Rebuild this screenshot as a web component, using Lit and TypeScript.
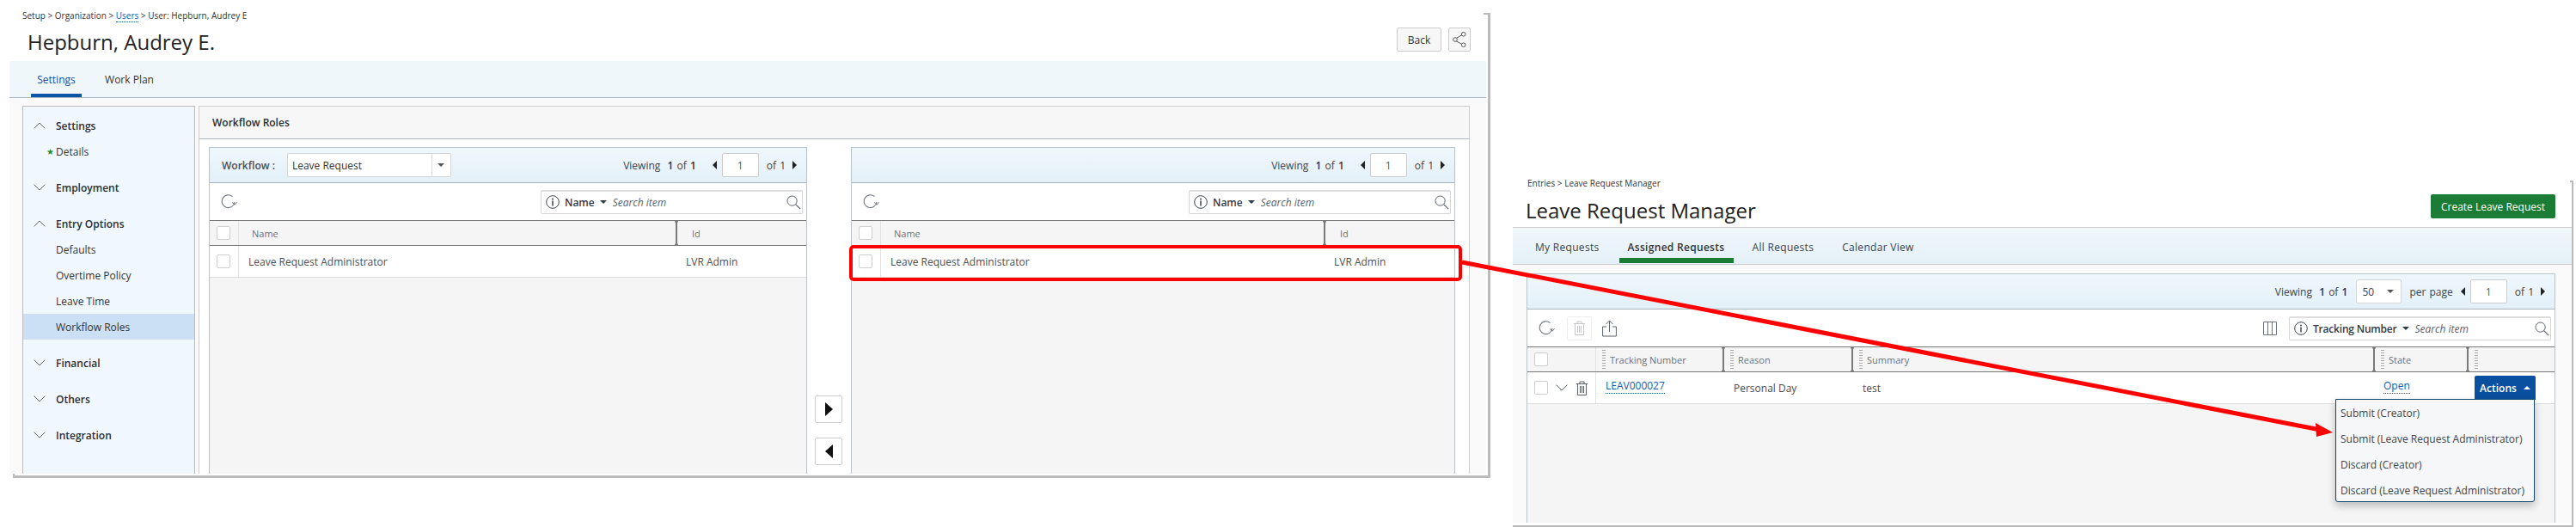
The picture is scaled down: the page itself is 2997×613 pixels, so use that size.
import { LitElement, html, css, svg } from "lit";
import { customElement } from "lit/decorators.js";

const refreshIcon = html`<svg class="ico" width="19" height="18" viewBox="0 0 19 18"><path d="M13.5 2.6A7.4 7.4 0 1 0 16 9" fill="none" stroke="#6d747c" stroke-width="1.1"/><path d="M13.2 9.6l3 2.6 2.3-3" fill="none" stroke="#6d747c" stroke-width="1"/></svg>`;
const infoIcon = html`<svg class="ico" width="16" height="16" viewBox="0 0 16 16"><circle cx="8" cy="8" r="7.3" fill="none" stroke="#3d4650" stroke-width="1"/><circle cx="8" cy="4.4" r="1" fill="#3d4650"/><path d="M8 6.6v5.8" stroke="#3d4650" stroke-width="1.5"/></svg>`;
const magIcon = html`<svg class="ico" width="17" height="17" viewBox="0 0 17 17"><circle cx="6.6" cy="6.6" r="5.6" fill="none" stroke="#59616a" stroke-width="1"/><path d="M10.6 10.6l5.6 5.6" stroke="#59616a" stroke-width="1.2"/></svg>`;
const trashIcon = (c: string) => html`<svg class="ico" width="15" height="17" viewBox="0 0 15 17"><path d="M1 3.5h13M5 3.5V1h5v2.5M2.5 3.5v13h10v-13M5.5 6v8M7.5 6v8M9.5 6v8" fill="none" stroke="${c}" stroke-width="1"/></svg>`;
const chevDown = html`<svg class="ico" width="14" height="8" viewBox="0 0 14 8"><path d="M.7.7L7 7l6.3-6.3" fill="none" stroke="#5c6670" stroke-width="1"/></svg>`;
const chevUp = html`<svg class="ico" width="14" height="8" viewBox="0 0 14 8"><path d="M.7 7.3L7 1l6.3 6.3" fill="none" stroke="#5c6670" stroke-width="1"/></svg>`;

@customElement("app-root")
export class AppRoot extends LitElement {
  static styles = css`
    :host { display: block; position: relative; width: 2997px; height: 613px; overflow: hidden; background: #fff;
      font-family: "Open Sans", sans-serif; color: #333; font-size: 12px; }
    .ico { display: block; flex: none; }
    .page { display: flex; align-items: flex-start; }

    .win-l { position: relative; margin-left: 11px; width: 1718px; height: 551px; display: flex; flex-direction: column; }
    .win-l::after { content: ""; position: absolute; left: 4px; top: 15px; width: 1716px; height: 538px;
      border-right: 3px solid #bbb; border-bottom: 3px solid #bbb; pointer-events: none; box-sizing: content-box; }
    .tick-t { position: absolute; right: -2px; top: 15px; width: 5px; height: 2px; background: #bbb; }
    .tick-b { position: absolute; left: 4px; top: 551px; width: 2px; height: 5px; background: #bbb; }
    .head-l { height: 71px; flex: none; padding-left: 15px; display: flex; justify-content: space-between; }
    .crumb { font-size: 10px; line-height: 14px; color: #333; white-space: nowrap; }
    .crumb a { color: #0a5bb5; border-bottom: 1px dotted #0a5bb5; }
    .h-l-text { padding-top: 11px; }
    h1 { margin: 0; font-weight: 400; color: #222; white-space: nowrap; }
    .h-l-text h1 { font-size: 24px; line-height: 34px; margin: 7px 0 0 6px; }
    .btns { display: flex; gap: 8px; padding: 32px 18px 0 0; }
    .btn { height: 28px; box-sizing: border-box; border: 1px solid #ccc; border-radius: 2px; background: #f7f7f7;
      display: flex; align-items: center; justify-content: center; font-size: 12px; }
    .back { width: 52px; }
    .share { width: 26px; }

    .tabs { flex: none; display: flex; background: #f0f7fb; border-bottom: 1px solid #aab6c4; box-sizing: border-box; }
    .tabs-l { height: 43px; padding-left: 25px; gap: 26px; }
    .tab-l { width: 59px; height: 42px; box-sizing: border-box; padding-top: 14px; line-height: 16px; text-align: center; white-space: nowrap; }
    .tab-l.on { color: #0a55a5; border-bottom: 4px solid #0a55a5; }
    .body-l { flex: 1; min-height: 0; background: #fafafa; display: flex; gap: 4px; padding: 9px 19px 0 15px; }
    .side { width: 201px; box-sizing: border-box; background: #f1f8fd; border: 1px solid #bbb; border-bottom: 0; padding-top: 7px; }
    .sec { height: 30px; display: flex; align-items: center; gap: 12px; padding-left: 12px; font-weight: 600; color: #2b2f33; }
    .sec.gap { margin-top: 12px; }
    .item { height: 30px; display: flex; align-items: center; padding-left: 38px; position: relative; }
    .item.on { background: #cce0f5; }
    .star { color: #1e8a3c; font-size: 10px; position: absolute; left: 27px; top: 8px; }

    .main { flex: 1; min-width: 0; box-sizing: border-box; background: #fff; border: 1px solid #ccc; border-bottom: 0; display: flex; flex-direction: column; }
    .main-h { height: 38px; flex: none; box-sizing: border-box; background: #f7f7f7; border-bottom: 1px solid #aab6c4; padding: 0 15px; display: flex; align-items: center; font-weight: 600; color: #2b2f33; }
    .main-b { flex: 1; min-height: 0; display: grid; grid-template-columns: 696px 51px 703px; padding: 9px 17px 0 11px; }
    .panel { box-sizing: border-box; border: 1px solid #b9c1c9; border-bottom: 0; background: #f5f5f5; display: flex; flex-direction: column; }
    .bar1 { height: 41px; flex: none; box-sizing: border-box; background: linear-gradient(#eff7fc, #e3f0f8); border-bottom: 1px solid #a9b1b9; display: flex; align-items: center; }
    .bar2 { height: 43px; flex: none; box-sizing: border-box; background: #fff; display: flex; align-items: center; padding-left: 13px; }
    .lab { font-weight: 600; color: #4a5158; margin-left: 14px; }
    .sel { box-sizing: border-box; height: 28px; background: #fff; border: 1px solid #d5d5d5; border-radius: 2px; display: flex; align-items: center; justify-content: space-between; }
    .sel-l { width: 191px; margin-left: 14px; padding-left: 5px; }
    .sel-l i { width: 21px; height: 26px; border-left: 1px solid #ddd; display: flex; align-items: center; justify-content: center; }
    .sel-r { width: 53px; margin: 0 9px 0 10px; padding: 0 8px 0 6px; }
    .caret { width: 0; height: 0; border: 4px solid transparent; border-top: 4px solid #555; border-bottom: 0; display: block; flex: none; }
    .caret.dk { border-top-color: #2f3a45; margin: 0 7px 0 6px; }
    .pager { margin-left: auto; margin-right: 11px; display: flex; align-items: center; white-space: nowrap; color: #3c444c; word-spacing: 1px; }
    .pager b { font-weight: 600; color: #333; }
    .tl { width: 0; height: 0; border: 5px solid transparent; border-right: 5px solid #222; border-left: 0; display: block; flex: none; margin-left: 9px; }
    .pager .first { margin-left: 19px; }
    .tr { width: 0; height: 0; border: 5px solid transparent; border-left: 5px solid #222; border-right: 0; display: block; flex: none; margin-left: 8px; }
    .pg { width: 43px; height: 28px; box-sizing: border-box; background: #fff; border: 1px solid #ccc; border-radius: 2px; display: flex; align-items: center; justify-content: center; color: #556; margin: 0 9px 0 6px; }
    .search { box-sizing: border-box; width: 305px; height: 28px; margin-left: auto; margin-right: 4px; border: 1px solid #d5d5d5; border-top: 2px solid #ddd; border-radius: 2px; background: #fff; display: flex; align-items: center; padding-left: 5px; }
    .search.after { margin-left: 14px; }
    .search.after .fld { letter-spacing: -.2px; }
    .search .fld { font-weight: 600; color: #2f3a45; margin-left: 6px; white-space: nowrap; }
    .search .ph { font-style: italic; color: #59616a; white-space: nowrap; }
    .search .mg { margin-left: auto; margin-right: 1px; }

    .thead, .trow { display: grid; flex: none; box-sizing: border-box; background: #fff; }
    .thead { height: 30px; background: #f5f5f5; border-top: 1px solid #777; border-bottom: 1px solid #777; color: #6a7178; font-size: 11px; }
    .trow { height: 37px; border-bottom: 1px solid #ddd; color: #474e55; }
    .roles-a { grid-template-columns: 34px 508px 1fr; }
    .roles-b { grid-template-columns: 34px 515px 1fr; }
    .reqs { grid-template-columns: 80px 147px 150px 607px 109px 1fr; }
    .c { display: flex; align-items: center; min-width: 0; white-space: nowrap; position: relative; }
    .p7 { padding-left: 7px; } .p11 { padding-left: 11px; } .p12 { padding-left: 12px; } .p13 { padding-left: 13px; } .p15 { padding-left: 15px; } .p17 { padding-left: 17px; }
    .ck { border-right: 1px solid #e2e2e2; padding-left: 8px; gap: 9px; }
    .box { width: 16px; height: 16px; box-sizing: border-box; border: 1px solid #cfcfcf; border-radius: 2px; background: #fff; flex: none; }
    .div { border-left: 2px solid #7a7a7a; }
    .div::before, .div::after { content: ""; position: absolute; left: -3px; width: 4px; height: 3px; background: #7a7a7a; border-radius: 50%; }
    .div::before { top: -1px; } .div::after { bottom: -1px; }
    .grip { width: 4px; height: 24px; margin-right: 5px; flex: none; background-image: radial-gradient(#aaa 0.6px, transparent 0.7px); background-size: 2px 3px; }

    .mid { display: flex; flex-direction: column; padding: 289px 0 0 9px; gap: 17px; }
    .mv { width: 32px; height: 32px; box-sizing: border-box; background: #fff; border: 1px solid #ccc; border-radius: 2px; display: flex; align-items: center; justify-content: center; }
    .tlb { border-width: 8px 9px 8px 0; border-right-color: #111; margin: 0; }
    .trb { border-width: 8px 0 8px 9px; border-left-color: #111; margin: 0; }

    .win-r { position: relative; margin: 205px 0 0 31px; width: 1232px; height: 403px; display: flex; flex-direction: column; }
    .win-r::after { content: ""; position: absolute; left: 0; top: 5px; width: 1232px; height: 401px; border-right: 2px solid #bbb; border-bottom: 2px solid #bbb; pointer-events: none; }
    .tick-r { position: absolute; right: -2px; top: 5px; width: 4px; height: 2px; background: #bbb; }
    .head-r { height: 60px; flex: none; box-sizing: border-box; border-bottom: 1px solid #ccc; display: flex; justify-content: space-between; padding-left: 15px; }
    .head-r h1 { font-size: 24px; line-height: 34px; margin: 7px 0 0 0; }
    .crumb-r { padding-left: 2px; height: 16px; line-height: 16px; }
    .create { margin: 21px 19px 0 0; width: 145px; height: 28px; background: #1b7c35; color: #fff; border-radius: 2px; display: flex; align-items: center; justify-content: center; }
    .tabs-r { height: 43px; background: linear-gradient(#f0f7fb, #e4f0f8); border-bottom: 1px solid #ccc; padding-left: 26px; }
    .tab-r { height: 42px; box-sizing: border-box; padding-top: 15px; line-height: 16px; white-space: nowrap; color: #3c444c; margin-left: 33px; letter-spacing: .3px; }
    .tab-r:first-child { margin-left: 0; }
    .tab-r.on { font-weight: 600; color: #333; border-bottom: 6px solid #1b7c35; height: 41px; text-align: center; width: 133px; margin-left: 23px; }
    .tab-r.on + .tab-r { margin-left: 22px; }
    .body-r { flex: 1; min-height: 0; display: flex; background: #fafafa; padding: 10px 19px 0 16px; }
    .panel-r { flex: 1; position: relative; }
    .bt-trash { margin-left: 14px; border: 1px solid #eee; border-radius: 2px; padding: 4px 6px 5px; display: block; }
    .bt-up { margin-left: 12px; }
    .bt-cols { margin-left: auto; }
    .link { color: #0a5bb5; border-bottom: 1px dotted #0a5bb5; line-height: 16px; margin-top: -4px; }
    .c-act { align-items: flex-start; }
    .actions { width: 71px; height: 28px; margin-left: 9px; background: #0a50a0; color: #fff; font-weight: 600; display: flex; align-items: center; justify-content: center; gap: 8px; border-radius: 2px 2px 0 0; margin-top: 4px; }
    .cu { width: 0; height: 0; border: 4px solid transparent; border-bottom: 4px solid #fff; border-top: 0; }
    .menu { position: absolute; left: 940px; top: 145px; width: 232px; height: 120px; box-sizing: border-box; background: #f5f7f8; border: 1px solid #134a6e; border-radius: 0 0 3px 3px; box-shadow: 0 4px 10px rgba(0,0,0,.25); display: grid; grid-auto-rows: 30px; z-index: 2; }
    .menu div { display: flex; align-items: center; padding-left: 5px; white-space: nowrap; color: #3c444c; }
    .over { position: absolute; left: 0; top: 0; pointer-events: none; z-index: 3; }
  `;

  private pager() {
    return html`<div class="pager">
      <span>Viewing&nbsp; <b>1</b> of <b>1</b></span>
      <span class="tl first"></span>
      <span class="pg">1</span>
      <span>of 1</span>
      <span class="tr"></span>
    </div>`;
  }
  private search(field: string, extra = "") {
    return html`<div class="search ${extra}">
      ${infoIcon}<span class="fld">${field}</span>
      <span class="caret dk"></span>
      <span class="ph">Search item</span>
      <span class="mg">${magIcon}</span>
    </div>`;
  }
  private rolePanel(cols: string, withSel: boolean) {
    return html`<div class="panel">
      <div class="bar1">
        ${withSel ? html`<span class="lab">Workflow :</span><div class="sel sel-l">Leave Request<i><span class="caret"></span></i></div>` : ""}
        ${this.pager()}
      </div>
      <div class="bar2">${refreshIcon}${this.search("Name")}</div>
      <div class="thead ${cols}">
        <div class="c ck"><span class="box"></span></div>
        <div class="c p15">Name</div>
        <div class="c div p17">Id</div>
      </div>
      <div class="trow ${cols}">
        <div class="c ck"><span class="box"></span></div>
        <div class="c p11">Leave Request Administrator</div>
        <div class="c p12">LVR Admin</div>
      </div>
    </div>`;
  }
  private sideSec(label: string, open: boolean, gap = true) {
    return html`<div class="sec ${gap ? "gap" : ""}">${open ? chevUp : chevDown}<span>${label}</span></div>`;
  }
  private leftWin() {
    return html`<div class="win-l">
      <div class="head-l">
        <div class="h-l-text">
          <div class="crumb">Setup &gt; Organization &gt; <a>Users</a> &gt; User: Hepburn, Audrey E</div>
          <h1>Hepburn, Audrey E.</h1>
        </div>
        <div class="btns">
          <div class="btn back">Back</div>
          <div class="btn share"><svg width="16" height="18" viewBox="0 0 16 18"><path d="M3.5 8L12 3M3.5 10.5L12 15" stroke="#555" fill="none"/><circle cx="3" cy="9" r="2.3" fill="#fff" stroke="#555"/><circle cx="12.7" cy="2.8" r="2.3" fill="#fff" stroke="#555"/><circle cx="12.7" cy="15.2" r="2.3" fill="#fff" stroke="#555"/></svg></div>
        </div>
      </div>
      <div class="tabs tabs-l">
        <div class="tab-l on">Settings</div>
        <div class="tab-l">Work Plan</div>
      </div>
      <div class="body-l">
        <div class="side">
          ${this.sideSec("Settings", true, false)}
          <div class="item"><span class="star">★</span>Details</div>
          ${this.sideSec("Employment", false)}
          ${this.sideSec("Entry Options", true)}
          <div class="item">Defaults</div>
          <div class="item">Overtime Policy</div>
          <div class="item">Leave Time</div>
          <div class="item on">Workflow Roles</div>
          ${this.sideSec("Financial", false)}
          ${this.sideSec("Others", false)}
          ${this.sideSec("Integration", false)}
        </div>
        <div class="main">
          <div class="main-h">Workflow Roles</div>
          <div class="main-b">
            ${this.rolePanel("roles-a", true)}
            <div class="mid">
              <div class="mv"><span class="tr trb"></span></div>
              <div class="mv"><span class="tl tlb"></span></div>
            </div>
            ${this.rolePanel("roles-b", false)}
          </div>
        </div>
      </div>
      <span class="tick-t"></span><span class="tick-b"></span>
    </div>`;
  }
  private rightWin() {
    return html`<div class="win-r">
      <div class="head-r">
        <div>
          <div class="crumb crumb-r">Entries &gt; Leave Request Manager</div>
          <h1>Leave Request Manager</h1>
        </div>
        <div class="create">Create Leave Request</div>
      </div>
      <div class="tabs tabs-r">
        <div class="tab-r">My Requests</div>
        <div class="tab-r on">Assigned Requests</div>
        <div class="tab-r">All Requests</div>
        <div class="tab-r">Calendar View</div>
      </div>
      <div class="body-r">
        <div class="panel panel-r">
          <div class="bar1">
            <div class="pager">
              <span>Viewing&nbsp; <b>1</b> of <b>1</b></span>
              <div class="sel sel-r">50<span class="caret"></span></div>
              <span>per page</span>
              <span class="tl"></span>
              <span class="pg">1</span>
              <span>of 1</span>
              <span class="tr"></span>
            </div>
          </div>
          <div class="bar2">
            ${refreshIcon}
            <span class="bt-trash">${trashIcon("#c4c8cc")}</span>
            <span class="bt-up"><svg class="ico" width="17" height="20" viewBox="0 0 17 20"><path d="M5 8H.6v11h15.8V8H12M8.5 14V1M4.5 5l4-4 4 4" fill="none" stroke="#59616a" stroke-width="1"/></svg></span>
            <span class="bt-cols"><svg class="ico" width="16" height="16" viewBox="0 0 16 16"><path d="M.5.5h15v15H.5zM5.5.5v15M10.5.5v15" fill="none" stroke="#6d747c" stroke-width="1"/></svg></span>
            ${this.search("Tracking Number", "after")}
          </div>
          <div class="thead reqs">
            <div class="c ck"><span class="box"></span></div>
            <div class="c p7"><span class="grip"></span>Tracking Number</div>
            <div class="c div p7"><span class="grip"></span>Reason</div>
            <div class="c div p7"><span class="grip"></span>Summary</div>
            <div class="c div p7"><span class="grip"></span>State</div>
            <div class="c div p7"><span class="grip"></span></div>
          </div>
          <div class="trow reqs">
            <div class="c ck"><span class="box"></span>${chevDown}${trashIcon("#59616a")}</div>
            <div class="c p11"><span class="link">LEAV000027</span></div>
            <div class="c p13">Personal Day</div>
            <div class="c p13">test</div>
            <div class="c p12"><span class="link">Open</span></div>
            <div class="c c-act"><div class="actions">Actions<span class="cu"></span></div></div>
          </div>
          <div class="menu">
            <div>Submit (Creator)</div>
            <div>Submit (Leave Request Administrator)</div>
            <div>Discard (Creator)</div>
            <div>Discard (Leave Request Administrator)</div>
          </div>
        </div>
      </div>
      <span class="tick-r"></span>
    </div>`;
  }
  render() {
    return html`<div class="page">${this.leftWin()}${this.rightWin()}</div>
    <svg class="over" width="2997" height="613" viewBox="0 0 2997 613">
      ${svg`<rect x="990" y="287" width="709" height="38" rx="3" fill="none" stroke="#f00" stroke-width="4"/>
      <path d="M1701 305L2697 499.5" stroke="#f00" stroke-width="5" fill="none"/>
      <path d="M2714 503L2694 492L2695 508Z" fill="#f00"/>`}
    </svg>`;
  }
}
